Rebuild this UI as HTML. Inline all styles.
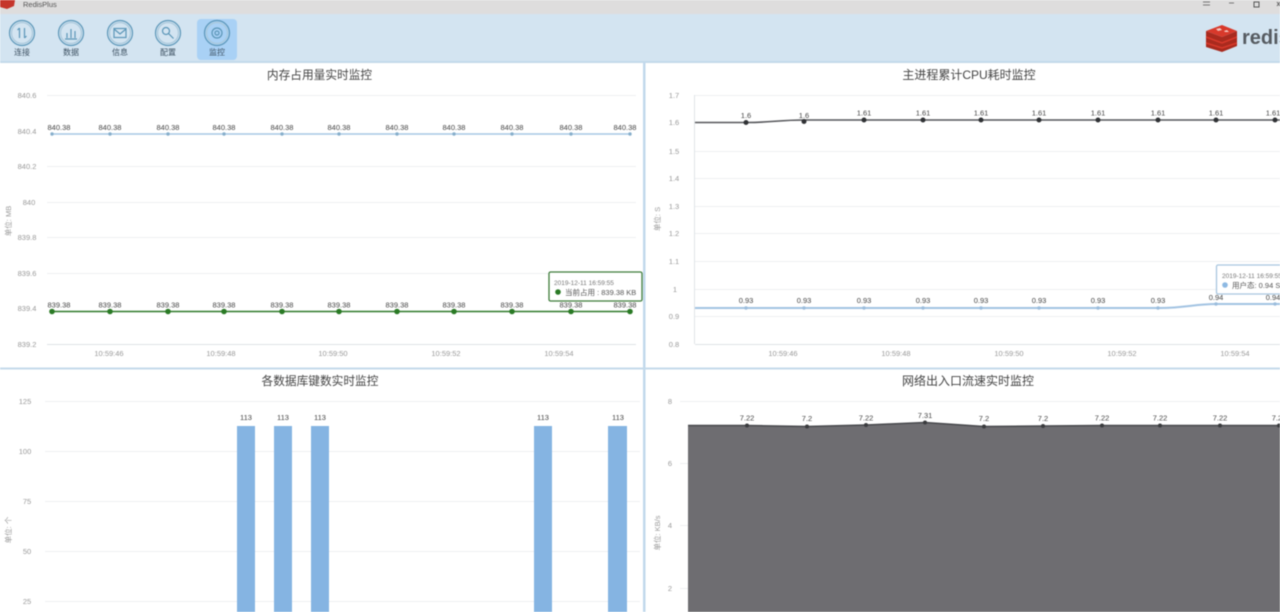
<!DOCTYPE html>
<html lang="zh"><head><meta charset="utf-8"><title>RedisPlus</title>
<style>
html,body{margin:0;padding:0;width:1280px;height:612px;overflow:hidden;background:#fff}
svg{display:block;filter:blur(.6px)}
text{font-family:"Liberation Sans","Noto Sans CJK SC",sans-serif}
.t{font-size:11.7px;fill:#444;text-anchor:middle}
.y{font-size:7.5px;fill:#999;text-anchor:middle}
.x{font-size:7.5px;fill:#999;text-anchor:middle}
.v{font-size:7.5px;fill:#444;text-anchor:middle}
.g{stroke:#eef0f2;stroke-width:1}
.n{font-size:8px;fill:#3b4f60;text-anchor:middle}
.ic{fill:none;stroke:#5b96b8;stroke-width:1.2}
</style></head><body>
<svg width="1280" height="612" viewBox="0 0 1280 612" xmlns="http://www.w3.org/2000/svg">
<rect width="1280" height="14" fill="#dedddd"/>
<rect y="14" width="1280" height="48" fill="#d3e4f1"/>
<rect y="61" width="1280" height="2" fill="#c3d9ea"/>
<path d="M0 0H15L14 6 7 9 0 7Z" fill="#c5352b"/>
<text x="23" y="7" font-size="7.5" fill="#555">RedisPlus</text>
<path d="M1203 2h7M1203 5h7M1229 3h5" stroke="#777" fill="none"/>
<rect x="1254" y="2" width="5" height="5" fill="none" stroke="#555"/>
<path d="M1277 2l3 4M1280 2l-3 4" stroke="#666" fill="none"/>

<!-- toolbar -->
<rect x="197" y="19" width="40" height="41" rx="4" fill="#a9d1f5"/>
<g class="ic">
<circle cx="22" cy="33" r="12.5"/><circle cx="22" cy="33" r="10.5" stroke="#a9c8db"/>
<path d="M19.500 28v10M17.500 30l2-2M24.500 38V28M24.500 38l2-2"/>
<circle cx="71" cy="33" r="12.5"/><circle cx="71" cy="33" r="10.500" stroke="#a9c8db"/>
<path d="M65 39h12M67 38v-5M71 38v-9M75 38v-7"/>
<circle cx="120" cy="33" r="12.500"/><circle cx="120" cy="33" r="10.500" stroke="#a9c8db"/>
<rect x="114" y="28.500" width="12" height="9"/><path d="M114 29l6 5 6-5"/>
<circle cx="168" cy="33" r="12.500"/><circle cx="168" cy="33" r="10.500" stroke="#a9c8db"/>
<circle cx="166" cy="31" r="3.500"/><path d="M168.500 33.500l5 5"/>
<circle cx="217" cy="33" r="12.500"/><circle cx="217" cy="33" r="10.500" stroke="#a9c8db"/>
<circle cx="217" cy="33" r="5"/><circle cx="217" cy="33" r="2"/>
</g>
<text class="n" x="22" y="55">连接</text>
<text class="n" x="71" y="55">数据</text>
<text class="n" x="120" y="55">信息</text>
<text class="n" x="168" y="55">配置</text>
<text class="n" x="217" y="55">监控</text>

<!-- logo -->
<path d="M1206 31l16-6 15 6-15 6z" fill="#d8392b"/>
<path d="M1206 31v16l16 5 15-6V31l-15 6z" fill="#a92a1e"/>
<path d="M1206 37l16 6 15-6M1206 43l16 5 15-5" stroke="#d8392b" stroke-width="1.500" fill="none"/>
<path d="M1216 29l4-1 2 2-4 1zM1224 31l3-1 2 2-4 0z" fill="#f2c7c0"/>
<text x="1242" y="44" font-size="20" font-weight="700" fill="#565b61">redis</text>

<!-- separators -->
<rect x="643" y="62" width="2.500" height="550" fill="#c2d9ec"/>
<rect y="367.500" width="1280" height="2" fill="#c4daeb"/>

<!-- panel titles -->
<text class="t" x="319.500" y="79">内存占用量实时监控</text>
<text class="t" x="969" y="79" style="font-size:12px">主进程累计CPU耗时监控</text>
<text class="t" x="320" y="385">各数据库键数实时监控</text>
<text class="t" x="968" y="385" style="font-size:12px">网络出入口流速实时监控</text>

<!-- panel 1 -->
<path class="g" d="M47 95.500H636M47 166.500H636M47 202.500H636M47 237.500H636M47 273.500H636"/>
<path d="M47 344.500H636" stroke="#dfe3e6"/>
<g class="y">
<text x="27" y="98">840.6</text><text x="27" y="134">840.4</text><text x="27" y="169">840.2</text><text x="29" y="205">840</text><text x="27" y="240">839.8</text><text x="27" y="276">839.6</text><text x="27" y="311">839.4</text><text x="27" y="347">839.2</text>
</g>
<text class="y" transform="translate(11 221) rotate(-90)">单位: MB</text>
<path d="M52 134H631" stroke="#a6c8e4" stroke-width="1.500"/>
<g fill="#86aecb"><circle cx="52" cy="134" r="1.700"/><circle cx="110" cy="134" r="1.700"/><circle cx="168" cy="134" r="1.700"/><circle cx="224" cy="134" r="1.700"/><circle cx="282" cy="134" r="1.700"/><circle cx="339" cy="134" r="1.700"/><circle cx="397" cy="134" r="1.700"/><circle cx="454" cy="134" r="1.700"/><circle cx="512" cy="134" r="1.700"/><circle cx="571" cy="134" r="1.700"/><circle cx="630" cy="134" r="1.700"/></g>
<g class="v"><text x="59" y="130">840.38</text><text x="110" y="130">840.38</text><text x="168" y="130">840.38</text><text x="224" y="130">840.38</text><text x="282" y="130">840.38</text><text x="339" y="130">840.38</text><text x="397" y="130">840.38</text><text x="454" y="130">840.38</text><text x="512" y="130">840.38</text><text x="571" y="130">840.38</text><text x="625" y="130">840.38</text></g>
<path d="M52 311.500H631" stroke="#2f7a2a" stroke-width="1.600"/>
<g fill="#2a7a25"><circle cx="52" cy="311.500" r="2.800"/><circle cx="110" cy="311.500" r="2.800"/><circle cx="168" cy="311.500" r="2.800"/><circle cx="224" cy="311.500" r="2.800"/><circle cx="282" cy="311.500" r="2.800"/><circle cx="339" cy="311.500" r="2.800"/><circle cx="397" cy="311.500" r="2.800"/><circle cx="454" cy="311.500" r="2.800"/><circle cx="512" cy="311.500" r="2.800"/><circle cx="571" cy="311.500" r="2.800"/><circle cx="630" cy="311.500" r="2.800"/></g>
<g class="v"><text x="59" y="307.500">839.38</text><text x="110" y="307.500">839.38</text><text x="168" y="307.500">839.38</text><text x="224" y="307.500">839.38</text><text x="282" y="307.500">839.38</text><text x="339" y="307.500">839.38</text><text x="397" y="307.500">839.38</text><text x="454" y="307.500">839.38</text><text x="512" y="307.500">839.38</text><text x="571" y="307.500">839.38</text><text x="625" y="307.500">839.38</text></g>
<g class="x"><text x="109" y="356">10:59:46</text><text x="221" y="356">10:59:48</text><text x="333" y="356">10:59:50</text><text x="446" y="356">10:59:52</text><text x="559" y="356">10:59:54</text></g>
<rect x="549" y="272" width="93" height="29" rx="1.500" fill="#fff" fill-opacity=".94" stroke="#3e7c3a" stroke-width="1.300"/>
<text x="554" y="285" font-size="6.500" fill="#777">2019-12-11 16:59:55</text>
<circle cx="558" cy="292" r="2.800" fill="#2a7a25"/>
<text x="565" y="295" font-size="7.500" fill="#555">当前占用 : 839.38 KB</text>

<!-- panel 2 -->
<path class="g" d="M695 95.500H1280M695 151.500H1280M695 178.500H1280M695 206.500H1280M695 233.500H1280M695 261.500H1280M695 289.500H1280M695 316.500H1280"/>
<path d="M695 344.500H1280" stroke="#dfe3e6"/>
<path d="M694.500 95V344" stroke="#e0e4e7"/>
<g class="y">
<text x="674" y="98">1.7</text><text x="674" y="125">1.6</text><text x="674" y="154">1.5</text><text x="674" y="181">1.4</text><text x="674" y="209">1.3</text><text x="674" y="236">1.2</text><text x="674" y="264">1.1</text><text x="675" y="292">1</text><text x="674" y="319">0.9</text><text x="674" y="347">0.8</text>
</g>
<text class="y" transform="translate(660 219) rotate(-90)">单位: S</text>
<path d="M695 122.500H746C770 122.500 780 120 804 120H1280" stroke="#55565a" stroke-width="1.600" fill="none"/>
<g fill="#303235"><circle cx="746" cy="122.500" r="2.500"/><circle cx="804" cy="121.500" r="2.500"/><circle cx="864" cy="120" r="2.500"/><circle cx="923" cy="120" r="2.500"/><circle cx="981" cy="120" r="2.500"/><circle cx="1039" cy="120" r="2.500"/><circle cx="1098" cy="120" r="2.500"/><circle cx="1158" cy="120" r="2.500"/><circle cx="1216" cy="120" r="2.500"/><circle cx="1275" cy="120" r="2.500"/></g>
<g class="v"><text x="746" y="118">1.6</text><text x="804" y="118">1.6</text><text x="864" y="115.500">1.61</text><text x="923" y="115.500">1.61</text><text x="981" y="115.500">1.61</text><text x="1039" y="115.500">1.61</text><text x="1098" y="115.500">1.61</text><text x="1158" y="115.500">1.61</text><text x="1216" y="115.500">1.61</text><text x="1273" y="115.500">1.61</text></g>
<path d="M695 308H1160C1185 308 1195 304 1216 304H1280" stroke="#a2c3e2" stroke-width="2" fill="none"/>
<g fill="#9bbddc"><circle cx="746" cy="308" r="1.700"/><circle cx="804" cy="308" r="1.700"/><circle cx="864" cy="308" r="1.700"/><circle cx="923" cy="308" r="1.700"/><circle cx="981" cy="308" r="1.700"/><circle cx="1039" cy="308" r="1.700"/><circle cx="1098" cy="308" r="1.700"/><circle cx="1158" cy="308" r="1.700"/><circle cx="1216" cy="304" r="1.700"/><circle cx="1275" cy="304" r="1.700"/></g>
<g class="v"><text x="746" y="303">0.93</text><text x="804" y="303">0.93</text><text x="864" y="303">0.93</text><text x="923" y="303">0.93</text><text x="981" y="303">0.93</text><text x="1039" y="303">0.93</text><text x="1098" y="303">0.93</text><text x="1158" y="303">0.93</text><text x="1216" y="300">0.94</text><text x="1273" y="300">0.94</text></g>
<g class="x"><text x="783" y="356">10:59:46</text><text x="896" y="356">10:59:48</text><text x="1009" y="356">10:59:50</text><text x="1122" y="356">10:59:52</text><text x="1235" y="356">10:59:54</text></g>
<rect x="1216.500" y="265" width="80" height="29" rx="1.500" fill="#fff" fill-opacity=".94" stroke="#a9c6df" stroke-width="1.300"/>
<text x="1222" y="278" font-size="6.500" fill="#777">2019-12-11 16:59:55</text>
<circle cx="1225" cy="285" r="2.800" fill="#8db9e3"/>
<text x="1232" y="288" font-size="7.500" fill="#555">用户态: 0.94 S</text>

<!-- panel 3 -->
<path class="g" d="M45 401.500H640M45 451.500H640M45 501.500H640M45 551.500H640M45 601.500H640"/>
<g class="y"><text x="25" y="404">125</text><text x="25" y="454">100</text><text x="27" y="504">75</text><text x="27" y="554">50</text><text x="27" y="604">25</text></g>
<text class="y" transform="translate(11 530) rotate(-90)">单位: 个</text>
<g fill="#85b4e2"><rect x="237" y="426" width="18" height="186"/><rect x="274" y="426" width="18" height="186"/><rect x="311" y="426" width="18" height="186"/><rect x="534" y="426" width="18" height="186"/><rect x="608" y="426" width="19" height="186"/></g>
<g class="v"><text x="246" y="420">113</text><text x="283" y="420">113</text><text x="320" y="420">113</text><text x="543" y="420">113</text><text x="618" y="420">113</text></g>

<!-- panel 4 -->
<path class="g" d="M680 401.500H1280M680 463.500H1280M680 525.500H1280M680 588.500H1280"/>
<g class="y"><text x="670" y="404">8</text><text x="670" y="466">6</text><text x="670" y="528">4</text><text x="670" y="591">2</text></g>
<text class="y" transform="translate(660 533) rotate(-90)">单位: KB/s</text>
<path d="M688 425.500H747L807 426.500 866 425 925 422.500 984 426.500 1043 426 1102 425.500H1280V612H688Z" fill="#6e6d71"/>
<path d="M688 425.500H747L807 426.500 866 425 925 422.500 984 426.500 1043 426 1102 425.500H1280" fill="none" stroke="#47484c" stroke-width="1.500"/>
<g fill="#3a3b3e"><circle cx="747" cy="425.500" r="2"/><circle cx="807" cy="426.500" r="2"/><circle cx="866" cy="425" r="2"/><circle cx="925" cy="422.500" r="2"/><circle cx="984" cy="426.500" r="2"/><circle cx="1043" cy="426" r="2"/><circle cx="1102" cy="425.500" r="2"/><circle cx="1160" cy="425.500" r="2"/><circle cx="1220" cy="425.500" r="2"/><circle cx="1279" cy="425.500" r="2"/></g>
<g class="v"><text x="747" y="420.500">7.22</text><text x="807" y="421">7.2</text><text x="866" y="420.500">7.22</text><text x="925" y="418">7.31</text><text x="984" y="421">7.2</text><text x="1043" y="421">7.2</text><text x="1102" y="420.500">7.22</text><text x="1160" y="420.500">7.22</text><text x="1220" y="420.500">7.22</text><text x="1279" y="420.500">7.22</text></g>
</svg>
</body></html>
